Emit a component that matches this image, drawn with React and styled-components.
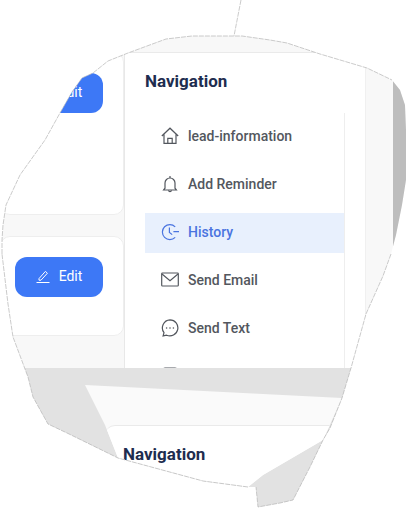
import React from 'react';
import styled, { createGlobalStyle } from 'styled-components';

const outline =
	'2px 240px, 3px 225px, 6px 205px, 20px 175px, 45px 140px, 60px 113px, 72px 92px, 82px 78px, 93px 73px, 108px 61px, 128px 53px, 166px 39px, 192px 36px, 242px 36px, 270px 40px, 287px 43px, 320px 54px, 367px 68px, 392px 80px, 400px 90px, 405px 105px, 406px 130px, 406px 180px, 402px 205px, 396px 235px, 391px 254px, 383px 276px, 366px 314px, 351px 368px, 342px 398px, 330px 428px, 323px 440px, 310px 467px, 293px 500px, 280px 503px, 258px 507px, 256px 487px, 248px 487px, 203px 481px, 118px 458px, 67px 433px, 48px 424px, 33px 397px, 28px 377px, 13px 337px, 8px 304px, 2px 254px';

const items = [
	{ label: 'lead-information', icon: 'home' },
	{ label: 'Add Reminder', icon: 'bell' },
	{ label: 'History', icon: 'history', active: true },
	{ label: 'Send Email', icon: 'mail' },
	{ label: 'Send Text', icon: 'chat' },
	{ label: '', icon: 'note' },
];

const icons = {
	home: (
		<>
			<path d='M.8 9 9 1.2 17.2 9M3 7.4v9h12v-9' />
			<path d='M6.8 16.4v-5h4.4v5' />
		</>
	),
	bell: (
		<>
			<path d='M9 3a5 5 0 0 0-5 5v5.2L2.6 15h12.8L14 13.2V8a5 5 0 0 0-5-5Z' />
			<path d='M9 1v2M7.4 15.4a1.7 1.7 0 0 0 3.2 0' />
		</>
	),
	history: (
		<>
			<path d='M14.2 3.8a7.5 7.5 0 1 0 0 10.6' />
			<path d='M8.4 4.6v4.8l2.8 2.2M12.4 8.6H18' />
		</>
	),
	mail: (
		<>
			<rect x='.7' y='2' width='16.6' height='13' rx='.8' />
			<path d='m1 3 8 6.6L17 3' />
		</>
	),
	chat: (
		<>
			<path d='M9 .9a8 8 0 1 1-3.4 15.3l-3.5.7.9-3.2A8 8 0 0 1 9 .9Z' />
			<circle cx='5.6' cy='9' r='.8' fill='currentColor' stroke='none' />
			<circle cx='9' cy='9' r='.8' fill='currentColor' stroke='none' />
			<circle cx='12.4' cy='9' r='.8' fill='currentColor' stroke='none' />
		</>
	),
	note: <rect x='2' y='1' width='14' height='16' rx='2' />,
};

const Icon = ({ name }) => (
	<IconSvg viewBox='0 0 18 18'>{icons[name]}</IconSvg>
);

const EditButton = () => (
	<Button>
		<svg width='14' height='14' viewBox='0 0 14 14' fill='none' stroke='currentColor' strokeWidth='1'>
			<path d='M3 9.6 9.4 2.4l2 1.8-6.4 7H3Z' />
			<path d='M.5 13.5h13' />
		</svg>
		Edit
	</Button>
);

const App = () => {
	return (
		<Stage>
			<GlobalStyle />
			<Sheet>
				<TopRow>
					<Cards>
						<Card $height={163}>
							<EditButton />
						</Card>
						<Card $height={100}>
							<EditButton />
						</Card>
					</Cards>
					<NavPanel>
						<NavTitle>Navigation</NavTitle>
						<NavList>
							{items.map((item) => (
								<NavItem key={item.icon} $active={item.active}>
									<Icon name={item.icon} />
									{item.label}
								</NavItem>
							))}
						</NavList>
					</NavPanel>
					<Gutter />
					<TornEdge />
				</TopRow>
				<Fold>
					<Flap>
						<FlapPanel>
							<FlapTitle>Navigation</FlapTitle>
						</FlapPanel>
					</Flap>
				</Fold>
			</Sheet>
			<TearLine viewBox='0 0 406 508'>
				<path d='M241 0 234 36' />
				<path d='M2 254 2 240 3 225 6 205 20 175 45 140 60 113 72 92 82 78 93 73 108 61 128 53 166 39 192 36 242 36 270 40 287 43 320 54 367 68 392 80' />
				<path d='M391 254 383 276 366 314 351 368 342 398 330 428 323 440 310 467 293 500 280 503 258 507 256 487' />
				<path d='M248 487 203 481 118 458 67 433 48 424 33 397 28 377 13 337 8 304 2 254' />
			</TearLine>
		</Stage>
	);
};

export default App;

const GlobalStyle = createGlobalStyle`
	body {
		margin: 0;
		background: #fff;
		font-family: Roboto, 'Liberation Sans', sans-serif;
	}
`;

const Stage = styled.div`
	position: relative;
	width: 406px;
	height: 508px;
	overflow: hidden;
`;

const Sheet = styled.div`
	width: 406px;
	height: 508px;
	background: #f8f8f8;
	clip-path: polygon(${outline});
`;

const TopRow = styled.div`
	display: flex;
	height: 316px;
	padding-top: 52px;
	overflow: hidden;
`;

const Cards = styled.div`
	display: flex;
	flex-direction: column;
	gap: 21px;
	width: 124px;
	flex-shrink: 0;
`;

const Card = styled.div`
	box-sizing: border-box;
	width: 124px;
	height: ${(p) => p.$height}px;
	padding: 20px 20px 0 14px;
	background: #fff;
	border: 1px solid #eeeeee;
	border-radius: 10px;
`;

const Button = styled.button`
	display: flex;
	align-items: center;
	justify-content: center;
	gap: 9px;
	width: 88px;
	height: 40px;
	padding: 0 0 2px;
	border: 0;
	border-radius: 12px;
	background: #3d78f6;
	color: #fff;
	font-family: inherit;
	font-size: 14px;
`;

const NavPanel = styled.div`
	box-sizing: border-box;
	width: 242px;
	flex-shrink: 0;
	padding-left: 20px;
	padding-right: 20px;
	background: #fff;
	border-top: 1px solid #eaeaea;
	border-left: 1px solid #e8e8e8;
	border-right: 1px solid #f0f0f0;
`;

const NavTitle = styled.h2`
	margin: 0;
	height: 60px;
	color: #1e2d4f;
	font-size: 17px;
	font-weight: 700;
	line-height: 56px;
`;

const NavList = styled.ul`
	display: flex;
	flex-direction: column;
	gap: 8px;
	margin: 0;
	padding: 4px 0 0;
	list-style: none;
	border-right: 1px solid #eeeeee;
`;

const NavItem = styled.li`
	display: flex;
	align-items: center;
	gap: 9px;
	box-sizing: border-box;
	height: 40px;
	flex-shrink: 0;
	padding: 0 0 2px 16px;
	background: ${(p) => (p.$active ? '#e8f0fd' : 'transparent')};
	color: ${(p) => (p.$active ? '#4a74e0' : '#53575e')};
	font-size: 14px;
	font-weight: 500;
`;

const IconSvg = styled.svg`
	width: 18px;
	height: 18px;
	flex-shrink: 0;
	fill: none;
	stroke: currentColor;
	stroke-width: 1.2;
`;

const Gutter = styled.div`
	width: 27px;
	flex-shrink: 0;
`;

const TornEdge = styled.div`
	width: 13px;
	flex-shrink: 0;
	background: #bdbdbd;
`;

const Fold = styled.div`
	height: 140px;
	background: #e2e2e2;
`;

const Flap = styled.div`
	box-sizing: border-box;
	height: 140px;
	padding: 57px 0 0 105px;
	background: #fafafa;
	clip-path: polygon(85px 17px, 342px 30px, 323px 72px, 263px 107px, 248px 119px, 203px 113px, 118px 90px, 105px 57px);
`;

const FlapPanel = styled.div`
	height: 83px;
	padding-left: 18px;
	background: #fff;
	border-top: 1px solid #eaeaea;
	border-top-left-radius: 10px;
`;

const FlapTitle = styled.h2`
	margin: 0;
	color: #1e2d4f;
	font-size: 17px;
	font-weight: 700;
	line-height: 56px;
`;

const TearLine = styled.svg`
	position: absolute;
	top: 0;
	left: 0;
	width: 406px;
	height: 508px;
	fill: none;
	stroke: #b4b4b4;
	stroke-width: 0.7;
	stroke-dasharray: 5 1;
	pointer-events: none;
`;
